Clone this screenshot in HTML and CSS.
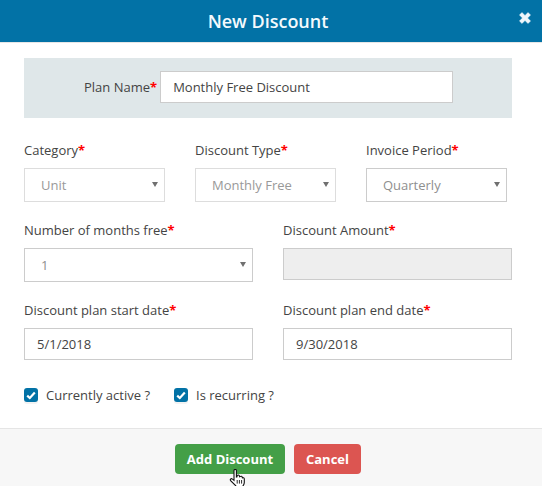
FILE: index.html
```html
<!DOCTYPE html>
<html lang="en">
<head>
<meta charset="utf-8">
<title>New Discount</title>
<link rel="stylesheet" href="styles.css">
</head>
<body>
<div class="modal">
  <header class="head">
    <h1>New Discount</h1>
    <svg class="close" width="12" height="12" viewBox="0 0 12 12"><path d="M3 .4 6 3.4 9 .4 11.6 3 8.6 6 11.6 9 9 11.6 6 8.6 3 11.6 .4 9 3.4 6 .4 3Z" fill="#eef6fb" stroke="#eef6fb" stroke-width=".4" stroke-linejoin="round"/></svg>
  </header>
  <main class="body">
    <section class="band">
      <label class="lbl band-lbl">Plan Name<b>*</b></label>
      <div class="input band-input">Monthly Free Discount</div>
    </section>
    <section class="row three">
      <div class="field"><label class="lbl">Category<b>*</b></label><div class="select light"><span>Unit</span></div></div>
      <div class="field"><label class="lbl">Discount Type<b>*</b></label><div class="select light"><span>Monthly Free</span></div></div>
      <div class="field"><label class="lbl">Invoice Period<b>*</b></label><div class="select"><span>Quarterly</span></div></div>
    </section>
    <section class="row two">
      <div class="field"><label class="lbl">Number of months free<b>*</b></label><div class="select"><span>1</span></div></div>
      <div class="field"><label class="lbl">Discount Amount<b>*</b></label><div class="input disabled"></div></div>
    </section>
    <section class="row two">
      <div class="field"><label class="lbl">Discount plan start date<b>*</b></label><div class="input">5/1/2018</div></div>
      <div class="field"><label class="lbl">Discount plan end date<b>*</b></label><div class="input">9/30/2018</div></div>
    </section>
    <section class="checks">
      <div class="check"><span class="box"><svg width="10" height="9" viewBox="0 0 10 9"><path d="M1.2 4.6 3.8 7 8.8 1.6" fill="none" stroke="#fff" stroke-width="2.2"/></svg></span>Currently active ?</div>
      <div class="check"><span class="box"><svg width="10" height="9" viewBox="0 0 10 9"><path d="M1.2 4.6 3.8 7 8.8 1.6" fill="none" stroke="#fff" stroke-width="2.2"/></svg></span>Is recurring ?</div>
    </section>
  </main>
  <footer class="foot">
    <button class="btn green">Add Discount</button>
    <button class="btn red">Cancel</button>
    <svg class="hand" width="18" height="20" viewBox="0 0 18 20"><path d="M5 1.5c0-1.4 2.4-1.4 2.4 0V8l.6-.2V6.6c.8-1 2.2-.8 2.4.2l.1 1 .6-.2c.8-.7 2-.4 2.1.5l.2.8c.8-.5 1.9 0 1.9 1v3.6c0 1.6-.7 2.6-1.4 3.5V19H6.8v-2.2L1.6 11.6c-.9-1.3.7-2.6 1.9-1.5L5 11.4Z" fill="#fff" stroke="#111" stroke-width="1.1"/><path d="M8.2 11v3.6M10.4 11v3.6M12.6 11v3.6" stroke="#111" stroke-width=".9"/></svg>
  </footer>
</div>
</body>
</html>
```
FILE: styles.css
```css
* { box-sizing: border-box; }
html, body { margin: 0; padding: 0; }
body { width: 542px; height: 486px; overflow: hidden; background: #fff; font-family: "Open Sans", sans-serif; font-size: 13px; color: #444; }
.modal { display: flex; flex-direction: column; height: 486px; position: relative; }
.head { height: 43px; flex: none; background: #0272a6; border-bottom: 1px solid #e6e6e6; display: flex; align-items: center; justify-content: center; padding-right: 6px; position: relative; }
.head h1 { margin: 0; font-size: 18px; font-weight: 600; color: #f4fafd; line-height: 42px; }
.close { position: absolute; right: 11px; top: 12px; }
.body { flex: 1; padding: 15px 30px 0 24px; }
.band { height: 60px; background: #dfe7e9; display: flex; align-items: center; padding: 0 0 2px 60px; }
.lbl { display: block; line-height: 18px; color: #444; margin-bottom: 9px; white-space: nowrap; }
.lbl b { color: #f00; font-weight: 700; }
.lbl.band-lbl { margin: 0 3px 0 0; }
.input { height: 32px; border: 1px solid #ccc; background: #fff; padding: 0 12px; line-height: 30px; color: #444; }
.band-input { width: 293px; }
.input.disabled { background: #eee; }
.row { display: grid; }
.three { grid-template-columns: repeat(3, 141px); column-gap: 30px; margin-top: 23px; }
.two { grid-template-columns: repeat(2, 229px); column-gap: 30px; }
.three + .two { margin-top: 19px; }
.two + .two { margin-top: 19px; }
.select { height: 34px; border: 1px solid #ccc; background: #fff; padding: 0 16px; line-height: 32px; color: #8f8f8f; position: relative; }
.select.light { border-color: #ddd; color: #999; }
.select::after { content: ""; position: absolute; right: 6px; top: 13px; border-left: 3px solid transparent; border-right: 3px solid transparent; border-top: 5px solid #707070; }
.checks { display: flex; gap: 24px; margin-top: 26px; }
.check { display: flex; align-items: center; gap: 8px; line-height: 18px; }
.box { width: 14px; height: 14px; background: #0272a6; border-radius: 3px; display: flex; align-items: center; justify-content: center; box-shadow: 0 2px 0 #f2f2f2; }
.foot { height: 58px; flex: none; background: #f7f7f7; border-top: 1px solid #e5e5e5; display: flex; justify-content: center; align-items: flex-start; gap: 9px; padding: 15px 6px 0 0; position: relative; }
.btn { height: 30px; border: 0; border-radius: 4px; color: #fff; font: 700 13px "Open Sans", sans-serif; padding: 0; }
.green { width: 110px; background: #449f47; }
.red { width: 67px; background: #dc5551; }
.hand { position: absolute; left: 229px; top: 40px; }
```
